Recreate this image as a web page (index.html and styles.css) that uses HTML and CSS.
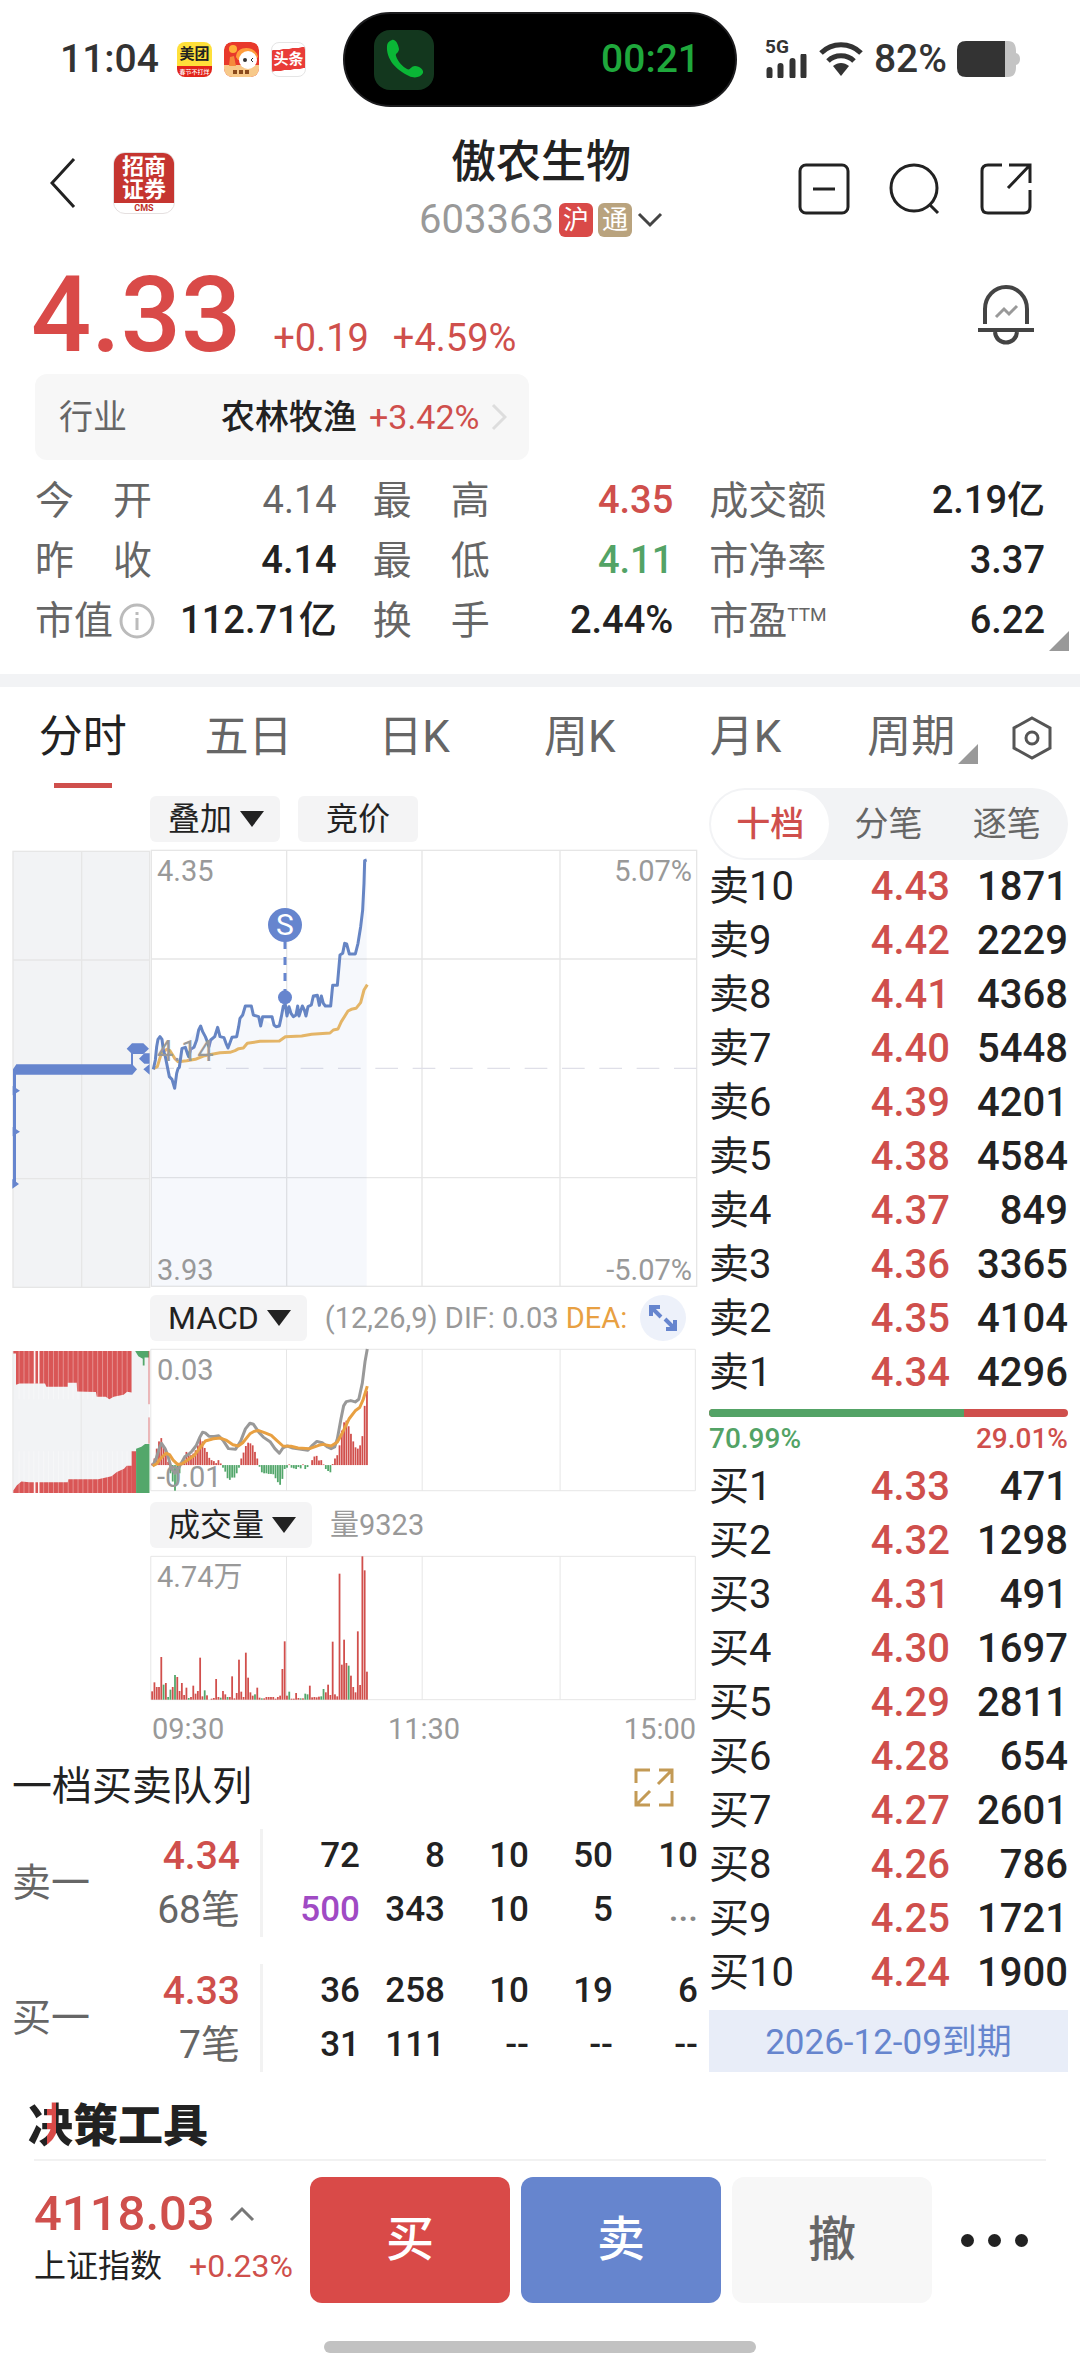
FILE: index.html
```html
<!DOCTYPE html>
<html lang="zh-CN">
<head>
    <meta charset="UTF-8">
    <meta name="viewport" content="width=device-width, initial-scale=1.0">
    <title>傲农生物 603363</title>
    <link rel="stylesheet" href="styles.css">
</head>
<body>

    <!-- Status bar -->
    <div class="status-bar">
        <div class="status-left">
            <span class="clock">11:04</span>
            <span class="app app-meituan"><b>美团</b><i>春节不打烊</i></span>
            <svg class="app" viewBox="0 0 35 35">
                <defs><clipPath id="appClip"><rect width="35" height="35" rx="8"/></clipPath></defs>
                <g clip-path="url(#appClip)">
                    <rect width="35" height="35" fill="#e8392b"/>
                    <rect y="23" width="35" height="12" fill="#f7c98a"/>
                    <circle cx="9" cy="7" r="4" fill="#ffb03a"/>
                    <path d="M5 24l1-9 4-1 2 10z" fill="#f58a3c"/>
                    <path d="M12 15c0-12 20-12 22 0l-3 3H14z" fill="#ff9d3c"/>
                    <circle cx="24" cy="18" r="9" fill="#fff"/>
                    <circle cx="21" cy="18" r="2" fill="#333"/>
                    <path d="M29 16l-2 2 2 2" fill="none" stroke="#333"/>
                    <path d="M9 30h4M15 30h4M21 30h4" stroke="#8a4a1c" stroke-width="4"/>
                </g>
            </svg>
            <span class="app app-toutiao"><b>头条</b></span>
        </div>
        <div class="island">
            <span class="call-icon">
                <svg viewBox="0 0 60 60"><path d="M18 10c3-1 6 3 7 9 0 4-4 4-3 7 2 6 7 11 11 13 3 2 4-3 8-3 5 0 9 4 8 7-2 4-8 6-14 3C22 40 12 29 13 16c0-3 2-5 5-6z" fill="#0ab636"/></svg>
            </span>
            <span class="call-time">00:21</span>
        </div>
        <div class="status-right">
            <span class="signal">
                <b>5G</b>
                <svg viewBox="0 0 42 24"><path d="M4 16v6M15 12v10M27 7v15M38 2v20" stroke="#333" stroke-width="6" stroke-linecap="round"/></svg>
            </span>
            <svg class="wifi" viewBox="0 0 46 36">
                <path d="M3 12c11-11 29-11 40 0M10 20c7-7 19-7 26 0" fill="none" stroke="#333" stroke-width="5"/>
                <path d="M15 25c5-4 11-4 16 0l-8 10z" fill="#333"/>
            </svg>
            <span class="percent">82%</span>
            <svg class="battery" viewBox="0 0 63 36">
                <path d="M48 0h3c6 0 8 4 8 10v2q4 1 4 6t-4 6v2c0 6-2 10-8 10h-3z" fill="#c4c4c4"/>
                <path d="M9 0h39v36H9q-9 0-9-9V9q0-9 9-9z" fill="#333"/>
            </svg>
        </div>
    </div>

    <!-- Header -->
    <header class="header">
        <div class="header-left">
            <button class="icon-btn" aria-label="返回">
                <svg width="26" height="52" viewBox="0 0 26 52"><path d="M24 2L2 26l22 24" fill="none" stroke="#222" stroke-width="3"/></svg>
            </button>
            <span class="broker"><span>招商<br>证券</span><b>CMS</b></span>
        </div>
        <div class="header-title">
            <h1>傲农生物</h1>
            <button class="code">603363 <span class="badge badge-hu">沪</span><span class="badge badge-tong">通</span>
                <svg width="26" height="16" viewBox="0 0 26 16"><path d="M2 2l11 11L24 2" fill="none" stroke="#444" stroke-width="3"/></svg>
            </button>
        </div>
        <div class="header-right">
            <button class="icon-btn" aria-label="删除自选">
                <svg width="52" height="52" viewBox="0 0 52 52" fill="none" stroke="#222" stroke-width="3"><rect x="2" y="2" width="48" height="48" rx="6"/><path d="M15 26h22"/></svg>
            </button>
            <button class="icon-btn" aria-label="搜索">
                <svg width="52" height="52" viewBox="0 0 52 52" fill="none" stroke="#222" stroke-width="3"><circle cx="25" cy="25" r="23"/><path d="M40 41l9 9"/></svg>
            </button>
            <button class="icon-btn" aria-label="分享">
                <svg width="52" height="52" viewBox="0 0 52 52" fill="none" stroke="#222" stroke-width="3"><path d="M22 2H8Q2 2 2 8v36q0 6 6 6h36q6 0 6-6V27M29 2h21v18M50 2L28 25"/></svg>
            </button>
        </div>
    </header>

    <!-- Quote -->
    <section class="quote">
        <div class="price-row">
            <span class="price">4.33</span>
            <span class="change">+0.19</span>
            <span class="change">+4.59%</span>
            <button class="icon-btn bell" aria-label="预警">
                <svg width="58" height="62" viewBox="0 0 58 62" fill="none" stroke="#444" stroke-width="4">
                    <path d="M8 40V25a21 22 0 0 1 42 0v15"/>
                    <path d="M1 46h56"/>
                    <path d="M18 48c1 14 21 14 22 0"/>
                    <path d="M19 33l8-8 5 5 8-8" stroke="#999" stroke-width="3"/>
                </svg>
            </button>
        </div>
        <a class="industry" href="#">
            <span class="label">行业</span>
            <span class="name">农林牧渔</span>
            <span class="up">+3.42%</span>
            <svg width="16" height="28" viewBox="0 0 16 28"><path d="M2 2l12 12L2 26" fill="none" stroke="#ddd" stroke-width="3"/></svg>
        </a>
        <dl class="stats">
            <div><dt>今　开</dt><dd class="gray">4.14</dd></div>
            <div><dt>最　高</dt><dd class="up">4.35</dd></div>
            <div><dt>成交额</dt><dd>2.19亿</dd></div>
            <div><dt>昨　收</dt><dd>4.14</dd></div>
            <div><dt>最　低</dt><dd class="down">4.11</dd></div>
            <div><dt>市净率</dt><dd>3.37</dd></div>
            <div>
                <dt>市值<svg width="36" height="36" viewBox="0 0 36 36" fill="none" stroke="#bbb" stroke-width="3"><circle cx="18" cy="18" r="16"/><path d="M18 15v12M18 9v3"/></svg></dt>
                <dd>112.71亿</dd>
            </div>
            <div><dt>换　手</dt><dd>2.44%</dd></div>
            <div><dt>市盈<sup>TTM</sup></dt><dd>6.22</dd></div>
        </dl>
        <svg class="corner" width="20" height="20" viewBox="0 0 20 20"><path d="M20 0v20H0z" fill="#999"/></svg>
    </section>

    <!-- Period tabs -->
    <nav class="tabs">
        <button class="tab active">分时</button>
        <button class="tab">五日</button>
        <button class="tab">日K</button>
        <button class="tab">周K</button>
        <button class="tab">月K</button>
        <button class="tab">周期<svg class="tab-corner" width="20" height="20" viewBox="0 0 20 20"><path d="M20 0v20H0z" fill="#999"/></svg></button>
        <button class="icon-btn gear" aria-label="设置">
            <svg width="40" height="44" viewBox="0 0 40 44" fill="none" stroke="#555" stroke-width="3"><path d="M20 2l18 10v20L20 42 2 32V12z"/><circle cx="20" cy="22" r="6"/></svg>
        </button>
    </nav>

    <main class="board">
        <div class="charts">
            <div class="chart-bar">
                <button class="chip">叠加<i class="arrow"></i></button>
                <button class="chip chip-wide">竞价</button>
            </div>
            <div class="chart">
                <svg class="price-chart" viewBox="36 24 2058 1320" preserveAspectRatio="none">
                    <!-- call auction panel -->
                    <rect x="39" y="34" width="410" height="1308" fill="#f2f3f5"/>
                    <g fill="none" stroke="#e6e6e6" stroke-width="4">
                        <rect x="39" y="34" width="410" height="1308"/>
                        <path d="M245 34v1308M39 360h410M39 1016h410"/>
                        <rect x="454" y="31" width="1636" height="1308"/>
                        <path d="M860 31v1308M1266 31v1308M1680 31v1308M454 357h1636M454 1013h1636"/>
                    </g>
                    <path d="M454 685h1636" stroke="#dfdfe8" stroke-width="4" stroke-dasharray="68 44"/>
                    <g fill="#6685ce">
                        <path d="M39 688l10-15h348l14 15-14 16H39z"/>
                        <path d="M39 690h9v342h-9z"/>
                        <path d="M38 738l22 14-22 14zM38 861l22 14-22 14zM37 1017l20 15-20 14z"/>
                        <path d="M393 626h6v54h-6zM380 626l16-16h34l17 16-17 16h-34zM417 656l16-16h16v31h-16zM430 688l19-16v32z"/>
                    </g>
                    <path fill="#6685ce" fill-opacity=".06" d="M460 688L480 590 524 745 546 625 602 558 627 620 653 562 684 624 710 590 736 498 754 498 776 530 828 560 856 494 918 528 940 468 992 498 998 436 1012 436 1020 345 1034 310 1048 342 1066 342 1088 210 1094 62 1100 60V1339H454V688z"/>
                    <polyline class="line" stroke="#e4b567" points="460,686 472,680 484,640 500,628 510,632 524,655 534,665 560,662 586,658 610,648 640,642 660,638 690,637 705,632 716,626 730,624 742,610 780,604 838,603 856,590 905,588 935,583 990,579 1000,570 1014,567 1024,545 1044,513 1054,508 1068,505 1082,488 1092,450 1102,434"/>
                    <polyline class="line" stroke="#6685c4" points="460,688 466,660 470,620 474,598 480,590 486,598 490,630 496,650 502,680 508,710 516,718 524,745 530,700 534,686 538,682 546,625 556,622 562,640 566,650 572,628 582,622 590,600 596,570 602,558 608,575 616,590 622,605 627,620 632,600 644,590 653,562 660,590 672,593 678,610 684,624 690,608 696,592 710,590 716,560 720,535 728,525 736,498 754,498 760,525 776,530 782,558 788,530 816,530 822,555 828,560 838,558 844,530 850,498 856,494 861,528 867,500 873,520 880,530 888,525 893,498 897,528 907,498 913,510 918,528 924,500 934,495 940,468 952,466 958,496 964,468 970,490 976,498 992,498 998,436 1012,436 1020,345 1028,340 1034,310 1040,312 1048,342 1066,342 1074,310 1082,260 1088,210 1092,130 1094,62 1100,60"/>
                    <path d="M855 303v150" stroke="#6685ce" stroke-width="9" stroke-dasharray="24"/>
                    <circle cx="855" cy="255" r="51" fill="#6685ce"/>
                    <circle cx="855" cy="472" r="21" fill="#6685ce"/>
                </svg>
                <span class="mark mark-tl">4.35</span>
                <span class="mark mark-tr">5.07%</span>
                <span class="mark mark-ml">4.14</span>
                <span class="mark mark-bl">3.93</span>
                <span class="mark mark-br">-5.07%</span>
                <span class="sell-mark">S</span>
            </div>

            <div class="chart-bar">
                <button class="chip">MACD<i class="arrow"></i></button>
                <span class="indicator">(12,26,9) DIF: 0.03 <em>DEA:</em></span>
                <button class="expand" aria-label="放大">
                    <svg width="28" height="38" viewBox="0 0 28 38" fill="none" stroke="#6685ce" stroke-width="4"><path d="M2 17V8h9M3 9l9 9M26 21v9h-9M25 29l-9-9"/></svg>
                </button>
            </div>
            <div class="chart">
                <svg class="macd-chart" viewBox="27 171 1537 450" preserveAspectRatio="none">
                    <defs>
                        <pattern id="stripes" width="11" height="450" patternUnits="userSpaceOnUse"><path d="M10 0v450" stroke="#fff" stroke-width="2" stroke-opacity=".45"/></pattern>
                    </defs>
                    <rect x="29" y="183" width="306" height="432" fill="#f2f3f5"/>
                    <path class="grid" d="M29 183v432M182 183v432M338 178h1220v430H338zM642 178v430M946 178v430M1255 178v430"/>
                    <path fill="#d95656" d="M30 183h265v126l-10-2-8 9-14 4-8 2-10 8-8-8h-20l-2-14-42-2-1-26h-20v12h-48l-3-10H44l-8 4v-95h-6z"/>
                    <path fill="#d95656" d="M30 615v-8l8-16 10-11 18 2h86l1-9h67l30-9 12-13 16-10 6-9h11v-44h10v127z"/>
                    <path fill="url(#stripes)" d="M38 183h257v147H38zM38 488h257v127H38z"/>
                    <path d="M78 183v100M87 183v100M78 580v35M87 580v35" stroke="#fff" stroke-width="3"/>
                    <path fill="#53a76b" d="M303 183h31v20h-10v24h-4v-20l-10-8zM305 615V480l12-6 8-8h10v149z"/>
                    <path d="M334 183v162M334 385v80" stroke="#d95656" stroke-width="2"/>
                    <g id="macdBars"></g>
                    <polyline class="line" stroke="#999" points="342,533 350,510 358,475 362,464 370,480 376,500 384,540 392,555 398,545 404,530 414,505 422,498 430,488 440,470 448,445 454,430 460,432 468,442 480,443 490,441 500,455 512,480 528,482 540,455 550,420 560,403 568,406 580,430 590,445 606,460 616,480 626,494 634,478 644,472 656,478 690,485 700,470 710,458 722,462 734,475 742,480 750,475 756,450 764,390 770,350 776,337 786,334 796,338 804,330 812,280 818,215 823,177"/>
                    <polyline class="line" stroke="#e8a042" points="342,533 352,525 360,510 372,494 380,498 388,515 398,528 408,526 420,515 436,500 448,478 460,457 478,450 494,448 508,455 522,468 534,472 544,462 560,435 570,427 580,425 594,432 608,440 620,455 634,472 652,473 668,478 694,480 714,470 724,467 742,472 756,460 768,430 782,390 796,365 806,355 814,330 823,290"/>
                </svg>
                <span class="mark mark-tl">0.03</span>
                <span class="mark mark-bl">-0.01</span>
            </div>

            <div class="chart-bar">
                <button class="chip">成交量<i class="arrow"></i></button>
                <span class="indicator">量9323</span>
            </div>
            <div class="chart">
                <svg class="volume-chart" viewBox="27 789 1537 444" preserveAspectRatio="none">
                    <path class="grid" d="M338 796h1220v430H338zM642 796v430M946 796v430M1255 796v430"/>
                    <g id="volumeBars"></g>
                </svg>
                <span class="mark mark-tl">4.74万</span>
            </div>
            <div class="times"><span>09:30</span><span>11:30</span><span>15:00</span></div>

            <!-- Level one queue -->
            <div class="queue-head">
                <h2>一档买卖队列</h2>
                <button class="icon-btn" aria-label="展开">
                    <svg width="40" height="40" viewBox="0 0 40 40" fill="none" stroke="#c39a55" stroke-width="3"><path d="M2 16V3h14M25 3h13v13M38 3L24 17M2 24v14h14M2 38l14-14M38 24v14H25"/></svg>
                </button>
            </div>
            <div class="queue">
                <span class="side">卖一</span>
                <div class="total"><b>4.34</b><span>68笔</span></div>
                <div class="orders">
                    <span>72</span><span>8</span><span>10</span><span>50</span><span>10</span>
                    <span class="big">500</span><span>343</span><span>10</span><span>5</span><span class="more">...</span>
                </div>
            </div>
            <div class="queue">
                <span class="side">买一</span>
                <div class="total"><b>4.33</b><span>7笔</span></div>
                <div class="orders">
                    <span>36</span><span>258</span><span>10</span><span>19</span><span>6</span>
                    <span>31</span><span>111</span><span>--</span><span>--</span><span>--</span>
                </div>
            </div>
        </div>

        <!-- Order book -->
        <aside class="book">
            <div class="segment">
                <button class="active">十档</button>
                <button>分笔</button>
                <button>逐笔</button>
            </div>
            <table>
                <tr><th>卖10</th><td>4.43</td><td>1871</td></tr>
                <tr><th>卖9</th><td>4.42</td><td>2229</td></tr>
                <tr><th>卖8</th><td>4.41</td><td>4368</td></tr>
                <tr><th>卖7</th><td>4.40</td><td>5448</td></tr>
                <tr><th>卖6</th><td>4.39</td><td>4201</td></tr>
                <tr><th>卖5</th><td>4.38</td><td>4584</td></tr>
                <tr><th>卖4</th><td>4.37</td><td>849</td></tr>
                <tr><th>卖3</th><td>4.36</td><td>3365</td></tr>
                <tr><th>卖2</th><td>4.35</td><td>4104</td></tr>
                <tr><th>卖1</th><td>4.34</td><td>4296</td></tr>
            </table>
            <div class="ratio-bar"><span style="width: 70.99%"></span></div>
            <div class="ratio-text"><span class="down">70.99%</span><span class="up">29.01%</span></div>
            <table>
                <tr><th>买1</th><td>4.33</td><td>471</td></tr>
                <tr><th>买2</th><td>4.32</td><td>1298</td></tr>
                <tr><th>买3</th><td>4.31</td><td>491</td></tr>
                <tr><th>买4</th><td>4.30</td><td>1697</td></tr>
                <tr><th>买5</th><td>4.29</td><td>2811</td></tr>
                <tr><th>买6</th><td>4.28</td><td>654</td></tr>
                <tr><th>买7</th><td>4.27</td><td>2601</td></tr>
                <tr><th>买8</th><td>4.26</td><td>786</td></tr>
                <tr><th>买9</th><td>4.25</td><td>1721</td></tr>
                <tr><th>买10</th><td>4.24</td><td>1900</td></tr>
            </table>
            <a class="expiry" href="#">2026-12-09到期</a>
        </aside>
    </main>

    <h2 class="tools"><span>决</span>策工具</h2>

    <!-- Trade bar -->
    <footer class="trade">
        <div class="index">
            <div class="index-value">4118.03
                <svg width="26" height="16" viewBox="0 0 26 16"><path d="M2 14L13 3l11 11" fill="none" stroke="#777" stroke-width="3"/></svg>
            </div>
            <div class="index-name"><span>上证指数</span><span class="up">+0.23%</span></div>
        </div>
        <button class="trade-btn buy">买</button>
        <button class="trade-btn sell">卖</button>
        <button class="trade-btn cancel">撤</button>
        <button class="icon-btn dots" aria-label="更多"><i></i><i></i><i></i></button>
    </footer>
    <div class="home-bar"></div>

    <script src="script.js"></script>
</body>
</html>
```

FILE: styles.css
```css
* {
    box-sizing: border-box;
}
body {
    margin: 0;
    background: #fff;
    color: #222;
    font-family: Roboto, "Noto Sans CJK SC", sans-serif;
    line-height: 1.2;
}
button {
    margin: 0;
    padding: 0;
    border: none;
    background: none;
    color: inherit;
    font: inherit;
    cursor: pointer;
}
a {
    color: inherit;
    text-decoration: none;
}
i, em {
    font-style: normal;
}
h1, h2, dl, dd {
    margin: 0;
    font-weight: 400;
}
svg {
    display: block;
    flex: none;
}
.icon-btn {
    display: flex;
}
.up {
    color: #cf4f4c;
}
.down {
    color: #53a366;
}

/* Status bar */
.status-bar {
    display: grid;
    grid-template-columns: 1fr 394px 1fr;
    align-items: center;
    padding-top: 12px;
    color: #333;
    font-size: 39px;
    font-weight: 500;
}
.status-left {
    display: flex;
    align-items: center;
    gap: 12px;
    padding-left: 60px;
}
.clock {
    margin-right: 6px;
}
.app {
    display: flex;
    flex-direction: column;
    align-items: center;
    width: 35px;
    height: 35px;
    border-radius: 8px;
    overflow: hidden;
}
.app-meituan {
    background: linear-gradient(#ffe03a 70%, #e2231a 70%);
    color: #222;
}
.app-meituan b {
    font-size: 15px;
    line-height: 25px;
}
.app-meituan i {
    color: #fff;
    font-size: 6px;
    line-height: 10px;
    white-space: nowrap;
}
.app-toutiao {
    justify-content: center;
    border: 1px solid #e5e5e5;
    background: linear-gradient(174deg, #fff 20%, #e93c38 21%, #e93c38 78%, #fff 79%);
    color: #fff;
}
.app-toutiao b {
    font-size: 15px;
    line-height: 22px;
}
.island {
    display: flex;
    align-items: center;
    justify-content: space-between;
    height: 95px;
    padding: 0 35px 0 29px;
    border: 2px solid #1c1c1e;
    border-radius: 48px;
    background: #000;
    color: #1fa83c;
}
.call-icon {
    width: 60px;
    height: 60px;
    border-radius: 16px;
    background: #13371e;
}
.status-right {
    display: flex;
    align-items: center;
    justify-content: space-between;
    padding: 0 60px 0 28px;
}
.signal {
    display: flex;
    flex-direction: column;
    width: 43px;
}
.signal b {
    font-size: 19px;
    line-height: 14px;
}
.signal svg {
    height: 24px;
}
.wifi {
    width: 46px;
}
.battery {
    width: 63px;
}

/* Header */
.header {
    display: grid;
    grid-template-columns: 1fr auto 1fr;
    align-items: center;
    padding: 28px 48px 0 50px;
}
.header-left {
    display: flex;
    align-items: center;
    gap: 37px;
    padding-bottom: 12px;
}
.broker {
    display: flex;
    flex-direction: column;
    width: 62px;
    border: 1px solid #e5e0e0;
    border-radius: 12px;
    overflow: hidden;
    background: #fff;
    color: #c0312b;
    text-align: center;
}
.broker span {
    padding: 2px 0;
    background: #c53530;
    color: #fff;
    font-size: 22px;
    font-weight: 700;
    line-height: 23px;
}
.broker b {
    font-size: 9px;
    line-height: 10px;
}
.header-title {
    text-align: center;
}
.header-title h1 {
    font-size: 45px;
    font-weight: 500;
    line-height: 56px;
}
.code {
    display: flex;
    align-items: center;
    gap: 5px;
    padding-top: 6px;
    color: #999;
    font-size: 40px;
    line-height: 46px;
}
.badge {
    width: 34px;
    height: 34px;
    border-radius: 6px;
    color: #fff;
    font-size: 26px;
    line-height: 34px;
}
.badge-hu {
    background: #d94a48;
}
.badge-tong {
    background: #b9a37e;
}
.header-right {
    display: flex;
    justify-content: flex-end;
    gap: 39px;
}

/* Quote */
.quote {
    position: relative;
    padding: 22px 35px 23px;
    border-bottom: 13px solid #f2f3f5;
}
.price-row {
    display: flex;
    align-items: baseline;
    gap: 24px;
    color: #cf4f4c;
}
.price {
    margin-right: 8px;
    margin-left: -4px;
    color: #d94a48;
    font-size: 106px;
    font-weight: 500;
    line-height: 100px;
}
.change {
    font-size: 38px;
}
.bell {
    align-self: center;
    margin-left: auto;
    margin-right: 10px;
}
.industry {
    display: inline-flex;
    align-items: center;
    gap: 12px;
    height: 86px;
    margin-top: 9px;
    padding: 0 22px 0 24px;
    border-radius: 12px;
    background: #f7f7f7;
    font-size: 34px;
}
.industry .label {
    margin-right: 82px;
    color: #666;
}
.industry .name {
    font-weight: 500;
}
.stats {
    display: grid;
    grid-template-columns: 301fr 300fr 335fr;
    column-gap: 36px;
    padding-top: 11px;
}
.stats div {
    display: flex;
    align-items: center;
    justify-content: space-between;
    height: 60px;
    white-space: nowrap;
}
.stats dt {
    display: flex;
    align-items: center;
    gap: 6px;
    color: #666;
    font-size: 39px;
}
.stats dt sup {
    align-self: flex-start;
    margin-left: -6px;
    padding-top: 6px;
    font-size: 19px;
}
.stats dd {
    font-size: 38px;
    font-weight: 500;
}
.stats .gray {
    color: #666;
    font-weight: 400;
}
.stats .up, .stats .down {
    font-weight: 500;
}
.corner {
    position: absolute;
    right: 11px;
    bottom: 23px;
}

/* Tabs */
.tabs {
    display: flex;
    height: 101px;
    color: #666;
    font-size: 44px;
}
.tab {
    position: relative;
    flex: 1;
}
.tab.active {
    color: #222;
}
.tab.active::after {
    content: "";
    position: absolute;
    bottom: 0;
    left: 50%;
    width: 58px;
    height: 5px;
    margin-left: -29px;
    background: #cf4f4c;
}
.tab-corner {
    position: absolute;
    right: 16px;
    bottom: 24px;
}
.gear {
    align-items: center;
    width: 86px;
    padding-left: 18px;
}

/* Charts */
.board {
    display: flex;
    justify-content: space-between;
    gap: 11px;
    padding: 0 12px;
}
.charts {
    flex: 1;
    min-width: 0;
    padding-top: 8px;
}
.chart-bar {
    display: flex;
    align-items: center;
    height: 46px;
    padding-left: 138px;
    white-space: nowrap;
}
.chip {
    display: flex;
    align-items: center;
    gap: 8px;
    height: 46px;
    margin-right: 18px;
    padding: 0 16px 0 18px;
    border-radius: 6px;
    background: #f4f4f5;
    font-size: 32px;
}
.chip-wide {
    padding: 0 28px;
}
.arrow {
    border: 12px solid transparent;
    border-top: 16px solid #222;
    border-bottom: none;
}
.indicator {
    color: #999;
    font-size: 29px;
}
.indicator em {
    color: #e8a042;
}
.expand {
    display: flex;
    align-items: center;
    justify-content: center;
    width: 46px;
    height: 46px;
    margin-left: auto;
    margin-right: 12px;
    border-radius: 50%;
    background: #edf1fa;
}
.chart {
    position: relative;
    margin: 6px 0 7px;
}
.chart svg {
    width: 100%;
}
.price-chart {
    height: 440px;
}
.macd-chart, .volume-chart {
    height: 148px;
}
.line {
    fill: none;
    stroke-width: 3px;
    stroke-linejoin: round;
    vector-effect: non-scaling-stroke;
}
.grid {
    fill: none;
    stroke: #e6e6e6;
    stroke-width: 1px;
    vector-effect: non-scaling-stroke;
}
.mark {
    position: absolute;
    color: #999;
    font-size: 29px;
    line-height: 30px;
}
.mark-tl, .mark-ml, .mark-bl {
    left: 145px;
}
.mark-tl, .mark-tr {
    top: 8px;
}
.mark-bl, .mark-br {
    bottom: 3px;
}
.mark-tr, .mark-br {
    right: 6px;
}
.mark-ml {
    top: 188px;
}
.sell-mark {
    position: absolute;
    top: 60px;
    left: 256px;
    width: 34px;
    color: #fff;
    font-size: 30px;
    line-height: 34px;
    text-align: center;
}
.times {
    display: flex;
    justify-content: space-between;
    padding: 0 2px 0 140px;
    color: #999;
    font-size: 29px;
    line-height: 40px;
}

/* Queue */
.queue-head {
    display: flex;
    align-items: center;
    justify-content: space-between;
    height: 56px;
    margin-top: 10px;
    padding-right: 24px;
}
.queue-head h2 {
    font-size: 40px;
}
.queue {
    display: flex;
    align-items: center;
    margin-top: 14px;
}
.queue + .queue {
    margin-top: 27px;
}
.side {
    flex: 1;
    color: #666;
    font-size: 39px;
}
.total {
    display: flex;
    flex-direction: column;
    padding-right: 20px;
    border-right: 3px solid #f2f2f2;
    color: #666;
    font-size: 39px;
    line-height: 54px;
    text-align: right;
}
.total b {
    color: #cf4f4c;
    font-weight: 500;
}
.orders {
    display: grid;
    grid-template-columns: 97px 85px 84px 84px 85px;
    font-size: 35px;
    font-weight: 500;
    line-height: 54px;
    text-align: right;
}
.orders .big {
    color: #a04ac4;
}
.orders .more {
    color: #888;
}

/* Order book */
.book {
    width: 359px;
}
.segment {
    display: flex;
    height: 72px;
    padding: 2px;
    border-radius: 36px;
    background: #f2f3f5;
    color: #666;
    font-size: 34px;
}
.segment button {
    flex: 1;
    border-radius: 34px;
}
.segment .active {
    background: #fff;
    color: #cf4f4c;
    font-weight: 500;
}
.book table {
    width: 100%;
    border-collapse: collapse;
    table-layout: fixed;
    font-size: 40px;
    font-weight: 500;
    line-height: 54px;
}
.book th, .book td {
    height: 54px;
    padding: 0;
    text-align: right;
    font-weight: 500;
}
.book th {
    width: 120px;
    text-align: left;
    font-weight: 400;
}
.book td:nth-child(2) {
    color: #cf4f4c;
}
.book td:nth-child(3) {
    width: 118px;
}
.ratio-bar {
    height: 8px;
    margin-top: 9px;
    border-radius: 4px;
    overflow: hidden;
    background: #cf4f4c;
}
.ratio-bar span {
    display: block;
    height: 8px;
    background: #53a366;
}
.ratio-text {
    display: flex;
    justify-content: space-between;
    font-size: 28px;
    font-weight: 500;
    line-height: 43px;
}
.expiry {
    display: block;
    margin-top: 10px;
    padding-top: 3px;
    background: #e8edf8;
    color: #6685ce;
    font-size: 35px;
    line-height: 59px;
    text-align: center;
}

/* Decision tools */
.tools {
    padding: 22px 28px 0;
    font-size: 45px;
    font-weight: 900;
    line-height: 65px;
}
.tools span {
    background: linear-gradient(90deg, #222 42%, #d94a48 42%, #d94a48 62%, #222 62%);
    background-clip: text;
    -webkit-background-clip: text;
    color: transparent;
}

/* Trade bar */
.trade {
    display: flex;
    gap: 11px;
    margin: 0 34px;
    padding: 16px 0 38px;
    border-top: 2px solid #f2f2f2;
}
.index {
    width: 265px;
    padding-top: 10px;
    white-space: nowrap;
}
.index-value {
    display: flex;
    align-items: center;
    gap: 14px;
    color: #cf4f4c;
    font-size: 49px;
    font-weight: 500;
    line-height: 54px;
}
.index-name {
    display: flex;
    justify-content: space-between;
    padding-right: 6px;
    font-size: 32px;
    line-height: 50px;
}
.trade-btn {
    flex: 1;
    height: 126px;
    border-radius: 12px;
    font-size: 48px;
    font-weight: 500;
}
.buy {
    background: #d94a48;
    color: #fff;
}
.sell {
    background: #6685ce;
    color: #fff;
}
.cancel {
    background: #f7f7f7;
    color: #666;
}
.dots {
    align-items: center;
    justify-content: center;
    gap: 14px;
    width: 103px;
}
.dots i {
    width: 13px;
    height: 13px;
    border-radius: 50%;
    background: #222;
}
.home-bar {
    width: 40%;
    height: 12px;
    margin: 0 auto 19px;
    border-radius: 6px;
    background: #c2c2c2;
}
```

FILE: script.js
```js
const macd = [5, 20, 50, 72, 82, 55, 30, 10, -25, -50, -78, -60, -25, 5, 15, 40, 30, 30, 35, 45,
    60, 82, 72, 52, 40, 22, 15, 12, 6, 15, 5, -8, -20, -40, -45, -38, -38, -25, -8, 20,
    38, 58, 68, 66, 60, 40, 20, -5, -22, -25, -25, -27, -27, -28, -40, -52, -60, -42, -12, -8,
    2, -8, -10, -12, -6, -10, 2, -12, -6, 0, 15, 26, 28, 14, 15, 2, -12, -18, -22, 3,
    20, 30, 60, 105, 130, 135, 118, 95, 72, 54, 50, 60, 88, 180, 225];

const volume = [25, 52, 38, 38, 128, 45, 50, 8, 30, 38, 74, 68, 26, 50, 14, 36, 5, 8, 42, 18,
    26, 126, 10, 28, 13, 0, 3, 5, 62, 8, 6, 26, 16, 8, 8, 70, 4, 20, 120, 24,
    8, 141, 66, 22, 12, 16, 36, 6, 4, 4, 8, 8, 8, 8, 3, 8, 12, 92, 175, 12,
    24, 3, 3, 20, 5, 4, 4, 18, 16, 42, 7, 8, 7, 9, 10, 32, 22, 45, 14, 174,
    16, 10, 378, 105, 180, 110, 102, 72, 38, 22, 205, 44, 430, 388, 84];

// minutes that closed lower
const falling = [5, 7, 8, 10, 16, 23, 30, 33, 45, 48, 60, 65, 67, 68, 74, 75, 86];

function addBar(group, index, top, height, color) {
    const bar = document.createElementNS('http://www.w3.org/2000/svg', 'rect');
    bar.setAttribute('x', 339 + index * 5.12);
    bar.setAttribute('y', top);
    bar.setAttribute('width', 4);
    bar.setAttribute('height', height);
    bar.setAttribute('fill', color);
    group.appendChild(bar);
}

const macdBars = document.getElementById('macdBars');
macd.forEach((value, i) => {
    addBar(macdBars, i, value > 0 ? 530 - value : 530, Math.abs(value), value > 0 ? '#d14f4c' : '#53a76b');
});

const volumeBars = document.getElementById('volumeBars');
volume.forEach((value, i) => {
    addBar(volumeBars, i, 1226 - value, value, falling.includes(i) ? '#53a76b' : '#d14f4c');
});
```
